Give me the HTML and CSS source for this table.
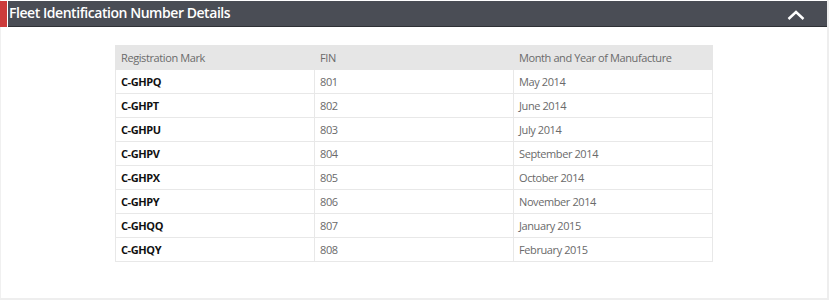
FILE: index.html
```html
<!DOCTYPE html>
<html>
<head>
<meta charset="utf-8">
<link rel="stylesheet" href="styles.css">
</head>
<body>
<div class="panel">
  <div class="panel-head">
    <div class="accent"></div>
    <div class="bar">
      <h2 class="title">Fleet Identification Number Details</h2>
      <svg class="chev" width="18" height="10" viewBox="0 0 18 10"><path d="M1.5 9 L9 2 L16.5 9" fill="none" stroke="#fff" stroke-width="2.4"/></svg>
    </div>
  </div>
  <div class="panel-body">
    <table class="fin">
      <thead>
        <tr><th>Registration Mark</th><th>FIN</th><th>Month and Year of Manufacture</th></tr>
      </thead>
      <tbody>
        <tr><td class="reg">C-GHPQ</td><td>801</td><td>May 2014</td></tr>
        <tr><td class="reg">C-GHPT</td><td>802</td><td>June 2014</td></tr>
        <tr><td class="reg">C-GHPU</td><td>803</td><td>July 2014</td></tr>
        <tr><td class="reg">C-GHPV</td><td>804</td><td>September 2014</td></tr>
        <tr><td class="reg">C-GHPX</td><td>805</td><td>October 2014</td></tr>
        <tr><td class="reg">C-GHPY</td><td>806</td><td>November 2014</td></tr>
        <tr><td class="reg">C-GHQQ</td><td>807</td><td>January 2015</td></tr>
        <tr><td class="reg">C-GHQY</td><td>808</td><td>February 2015</td></tr>
      </tbody>
    </table>
  </div>
</div>
</body>
</html>
```
FILE: styles.css
```css
html, body { margin: 0; padding: 0; background: #fff; }
body { font-family: "Open Sans", "Liberation Sans", sans-serif; }
.panel {
  border-right: 2px solid #eeeeee;
  border-bottom: 2px solid #eeeeee;
  border-left: 1px solid #f0f0f0;
  box-sizing: border-box;
  width: 829px;
  height: 300px;
  display: flex;
  flex-direction: column;
}
.panel-head {
  display: flex;
  height: 26px;
  margin-top: 1px;
  margin-left: -1px;
}
.accent { width: 7px; background: #cc3b3b; }
.bar {
  flex: 1;
  margin-left: 1px;
  background: #4a4d55;
  border-bottom: 1px solid #2f3136;
  display: flex;
  align-items: center;
  justify-content: space-between;
  padding-right: 22px;
}
.title {
  margin: 0;
  color: #fff;
  font-size: 14px;
  font-weight: 600;
  letter-spacing: -0.45px;
  padding-left: 1px;
  line-height: 20px;
  margin-top: -2px;
}
.chev { margin-top: 3px; }
.panel-body {
  padding-top: 18px;
  padding-left: 114px;
}
.fin {
  border-collapse: collapse;
  width: 598px;
  font-size: 11px;
  letter-spacing: -0.4px;
  color: #666;
  table-layout: fixed;
}
.fin th, .fin td {
  border: 1px solid #e8e8e8;
  height: 23px;
  padding: 0 5px;
  text-align: left;
  font-weight: 400;
  vertical-align: middle;
}
.fin th { background: #e6e6e6; color: #6b6b6b; border-color: #e6e6e6; }
.fin td { color: #6a6a6a; }
.fin td.reg { color: #111; font-weight: 700; }
.fin th:nth-child(1) { width: 188px; }
.fin th:nth-child(2) { width: 188px; }
```
